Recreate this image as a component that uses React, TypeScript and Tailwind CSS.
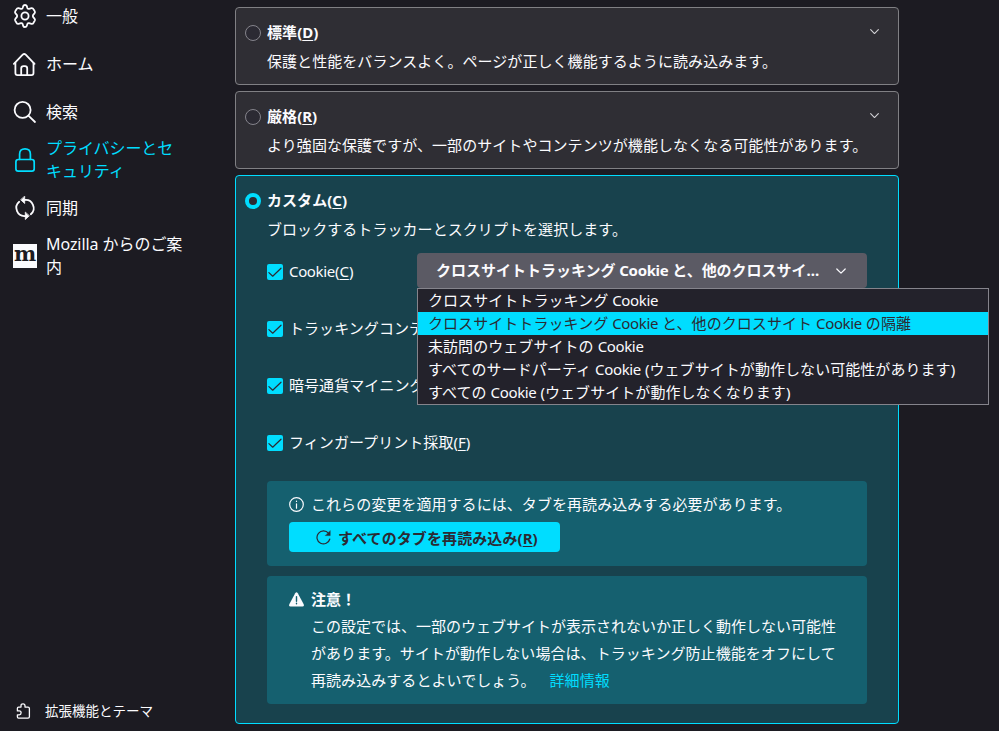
import React from "react";

const stroke = {
  fill: "none",
  stroke: "currentColor",
  strokeLinecap: "round" as const,
  strokeLinejoin: "round" as const,
};

function GearIcon() {
  return (
    <svg className="size-6" viewBox="0 0 24 24" {...stroke} strokeWidth="1.8">
      <path d="M10.3 1.9Q10.6 1 12 1T13.7 1.9L14.4 4.1Q14.9 5.1 16 4.9L18.5 4.2Q19.9 4 20.5 5.2L21.8 7.4Q22.3 8.4 21.5 9.3L20.2 10.8Q19.4 12 20.2 13.2L21.5 14.7Q22.3 15.6 21.8 16.6L20.5 18.8Q19.9 20 18.5 19.8L16 19.1Q14.9 18.9 14.4 19.9L13.7 22.1Q13.4 23 12 23T10.3 22.1L9.6 19.9Q9.1 18.9 8 19.1L5.5 19.8Q4.1 20 3.5 18.8L2.2 16.6Q1.7 15.6 2.5 14.7L3.8 13.2Q4.6 12 3.8 10.8L2.5 9.3Q1.7 8.4 2.2 7.4L3.5 5.2Q4.1 4 5.5 4.2L8 4.9Q9.1 5.1 9.6 4.1Z" />
      <circle cx="12" cy="12" r="3.6" />
    </svg>
  );
}

function HomeIcon() {
  return (
    <svg className="size-6" viewBox="0 0 24 24" {...stroke} strokeWidth="1.8">
      <path d="M.9 11.9L9.7 2.7Q11.2 1.3 12.7 2.7L21.5 11.9" />
      <path d="M2.4 10.8V21Q2.4 23.1 4.5 23.1H18.4Q20.5 23.1 20.5 21V10.8" />
      <path d="M8.2 22.8V16.5Q8.2 14.1 10.4 14.1H12Q14.2 14.1 14.2 16.5V22.8" />
    </svg>
  );
}

function SearchIcon() {
  return (
    <svg className="size-6" viewBox="0 0 24 24" {...stroke} strokeWidth="1.8">
      <circle cx="9.6" cy="9.9" r="8" />
      <path d="M15.4 15.7L22 22" />
    </svg>
  );
}

function LockIcon() {
  return (
    <svg className="size-6" viewBox="0 0 24 24" {...stroke} strokeWidth="1.7">
      <rect x="2.9" y="11.5" width="18.3" height="11.6" rx="2.4" />
      <path d="M6.6 11.3V6.2Q6.6.9 12 .9T17.4 6.2V11.3" />
    </svg>
  );
}

function SyncIcon() {
  return (
    <svg className="size-6" viewBox="0 0 24 24" {...stroke} strokeWidth="1.8">
      <path d="M6.2 5.8A8.1 8.1 0 0 0 12.4 20" />
      <path d="M17.8 18.2A8.1 8.1 0 0 0 11.6 4" />
      <path d="M11.7 .5V7.5L7.9 4Z" fill="currentColor" strokeWidth=".8" />
      <path d="M12.3 16.5V23.5L16.1 20Z" fill="currentColor" strokeWidth=".8" />
    </svg>
  );
}

function MozillaIcon() {
  return (
    <span className="flex size-6 items-center justify-center overflow-hidden bg-[#fbfbfe] pb-[5px] font-['DejaVu_Serif',serif] text-[21px] leading-none font-bold text-[#1c1b22]">
      m
    </span>
  );
}

function PuzzleIcon() {
  return (
    <svg className="size-4" viewBox="0 0 16 16" {...stroke} strokeWidth="1.3">
      <path d="M1.4 5.2Q1.4 4.1 2.5 4.1H5V2.8Q5 .8 7 .8T9 2.8V4.1H12Q13.4 4.1 13.4 5.5V13.7Q13.4 15.1 12 15.1H2.5Q1.4 15.1 1.4 14V11.8H3.2Q5.1 11.7 5.1 9.8T3.2 7.9H1.4Z" />
    </svg>
  );
}

function Chevron({ className }: { className: string }) {
  return (
    <svg className={className} viewBox="0 0 12 12" {...stroke} strokeWidth="1.2">
      <path d="M1.8 4L6 8.2L10.2 4" />
    </svg>
  );
}

const navItems = [
  { label: "一般", icon: <GearIcon /> },
  { label: "ホーム", icon: <HomeIcon /> },
  { label: "検索", icon: <SearchIcon /> },
  { label: "プライバシーとセキュリティ", icon: <LockIcon />, active: true },
  { label: "同期", icon: <SyncIcon /> },
  { label: "Mozilla からのご案内", icon: <MozillaIcon /> },
];

/** Sets the Latin product name slightly tighter than the Japanese text around it. */
function Mixed({ text }: { text: string }) {
  return (
    <>
      {text.split(/(Cookie)/).map((part, i) =>
        i % 2 === 1 ? (
          <span key={i} className="tracking-[-0.35px]">
            {part}
          </span>
        ) : (
          part
        ),
      )}
    </>
  );
}

function Sidebar() {
  return (
    <aside className="flex h-full w-[235px] shrink-0 flex-col justify-between pb-2 pl-[13px] tracking-normal">
      <nav className="-mt-2 flex flex-col">
        {navItems.map((item) => (
          <div
            key={item.label}
            className={`flex h-12 items-center gap-[9px] text-base leading-[23px] ${item.active ? "text-[#00ddff]" : "text-[#fbfbfe]"}`}
          >
            <span className="shrink-0">{item.icon}</span>
            <span className="w-[138px] tracking-[-0.06px] break-all">{item.label}</span>
          </div>
        ))}
      </nav>
      <div className="flex items-center gap-[13px] pl-[3px] text-[13.5px] leading-6 text-[#fbfbfe]">
        <PuzzleIcon />
        <span>拡張機能とテーマ</span>
      </div>
    </aside>
  );
}

function Key({ k }: { k: string }) {
  return (
    <span className="tracking-normal">
      (<span className="underline decoration-1 underline-offset-2">{k}</span>)
    </span>
  );
}

function LevelCard({ title, k, text }: { title: string; k: string; text: string }) {
  return (
    <section className="flex h-[78px] rounded border border-[#808084] bg-[#2f2e34] pt-[11px] pl-[9px]">
      <span className="mt-1.5 mr-1.5 size-4 shrink-0 rounded-full border border-[#85848c] bg-[#2b2a33]" />
      <div className="flex flex-1 flex-col gap-0.5 leading-[27px]">
        <h2 className="font-bold">
          {title}
          <Key k={k} />
        </h2>
        <p>{text}</p>
      </div>
      <Chevron className="mt-[7px] mr-[18px] size-[11px] text-[#d2d2d6]" />
    </section>
  );
}

const blockRows = [
  { label: "Cookie", k: "C" },
  { label: "トラッキングコンテ", k: "" },
  { label: "暗号通貨マイニング", k: "" },
  { label: "フィンガープリント採取", k: "F" },
];

const options = [
  "クロスサイトトラッキング Cookie",
  "クロスサイトトラッキング Cookie と、他のクロスサイト Cookie の隔離",
  "未訪問のウェブサイトの Cookie",
  "すべてのサードパーティ Cookie (ウェブサイトが動作しない可能性があります)",
  "すべての Cookie (ウェブサイトが動作しなくなります)",
];

function CookieSelect() {
  return (
    <div className="relative mt-[10px] h-[35px] w-[450px]">
      <div className="flex h-full items-center rounded bg-[#5b5a64] pr-5 pl-[19px] font-bold">
        <span className="w-[396px] truncate leading-[27px] tracking-[-0.01px]">
          <Mixed text="クロスサイトトラッキング Cookie と、他のクロスサイ..." />
        </span>
        <Chevron className="ml-[3px] size-3 shrink-0" />
      </div>
      <ul className="absolute top-[35px] left-0 z-10 w-[572px] border border-[#85848c] bg-[#23222b]">
        {options.map((option, i) => (
          <li
            key={option}
            className={`h-[23px] pl-2.5 leading-[23px] whitespace-nowrap ${i === 1 ? "bg-[#00ddff] text-[#2b2a33]" : ""}`}
          >
            <Mixed text={option} />
          </li>
        ))}
      </ul>
    </div>
  );
}

function BlockRow({ label, k, children }: { label: string; k: string; children?: React.ReactNode }) {
  return (
    <div className="flex h-[57px] items-start">
      <div className="flex w-[150px] shrink-0 items-center gap-1.5 pt-[15px] leading-[27px] whitespace-nowrap">
        <span className="size-4 shrink-0 rounded-xs bg-[#00ddff] text-[#2b2a33]">
          <svg className="size-4" viewBox="0 0 16 16" {...stroke} strokeWidth="1.2">
            <path d="M1.9 8.6L5.7 12.2L14 4.2" />
          </svg>
        </span>
        <span>
          <Mixed text={label} />
          {k && <Key k={k} />}
        </span>
      </div>
      {children}
    </div>
  );
}

function CustomCard() {
  return (
    <section className="flex h-[549px] rounded border border-[#00ddff] bg-[#18424d] pt-[11px] pl-[9px]">
      <span className="mt-1.5 mr-1.5 size-4 shrink-0 rounded-full border-4 border-[#00ddff] bg-[#2b2a33]" />
      <div className="w-[600px] leading-[27px]">
        <h2 className="font-bold">
          カスタム
          <Key k="C" />
        </h2>
        <p className="mt-0.5">ブロックするトラッカーとスクリプトを選択します。</p>
        <div>
          {blockRows.map((row, i) => (
            <BlockRow key={row.label} label={row.label} k={row.k}>
              {i === 0 && <CookieSelect />}
            </BlockRow>
          ))}
        </div>
        <div className="mt-[10px] h-[85px] rounded bg-[#15606f] pt-2.5 pl-[22px]">
          <div className="flex items-center gap-[7px]">
            <svg className="size-[15px]" viewBox="0 0 15 15" {...stroke} strokeWidth="1.2">
              <circle cx="7.5" cy="7.5" r="6.8" />
              <path d="M7.5 6.8V11.2M7.5 4.1V4.4" />
            </svg>
            <span>これらの変更を適用するには、タブを再読み込みする必要があります。</span>
          </div>
          <button className="mt-1 flex h-[30px] w-[271px] items-center rounded bg-[#00ddff] pl-[27px] font-bold tracking-[0.1px] text-[#2b2a33]">
            <svg className="mr-[7px] size-[15px]" viewBox="0 0 15 15" {...stroke} strokeWidth="1.2">
              <path d="M13.8 9A6.5 6.5 0 1 1 12.6 3.4" />
              <path d="M14.2 1V5.6H9.6Z" fill="currentColor" strokeWidth=".5" />
            </svg>
            <span className="pt-0.5">
              すべてのタブを再読み込み
              <Key k="R" />
            </span>
          </button>
        </div>
        <div className="mt-2.5 h-32 rounded bg-[#15606f] pt-2.5 pl-[22px]">
          <div className="flex items-center gap-[7px] font-bold">
            <svg className="size-[15px]" viewBox="0 0 15 15">
              <path
                d="M6.2 1.2Q7.5-.5 8.8 1.2L14.7 12.3Q15.3 14.3 13.5 14.5H1.5Q-.3 14.3.3 12.3Z"
                fill="#fbfbfe"
              />
              <path d="M7.5 4.6V9.3M7.5 11.3V11.7" stroke="#15606f" strokeWidth="1.4" strokeLinecap="round" />
            </svg>
            <span>注意！</span>
          </div>
          <p className="pl-[22px] whitespace-nowrap">
            <span className="tracking-normal">
              この設定では、一部のウェブサイトが表示されないか正しく動作しない可能性
            </span>
            <br />
            があります。サイトが動作しない場合は、トラッキング防止機能をオフにして
            <br />
            再読み込みするとよいでしょう。
            <a className="ml-[14px] text-[#00ddff]">詳細情報</a>
          </p>
        </div>
      </div>
    </section>
  );
}

export default function App() {
  return (
    <div
      lang="ja"
      className="flex h-[731px] w-[999px] overflow-hidden bg-[#1c1b22] font-['Noto_Sans','Noto_Sans_CJK_JP',sans-serif] text-[15px] tracking-[0.06px] text-[#fbfbfe]"
    >
      <Sidebar />
      <main className="flex w-[664px] shrink-0 flex-col gap-1.5 pt-[7px]">
        <LevelCard
          title="標準"
          k="D"
          text="保護と性能をバランスよく。ページが正しく機能するように読み込みます。"
        />
        <LevelCard
          title="厳格"
          k="R"
          text="より強固な保護ですが、一部のサイトやコンテンツが機能しなくなる可能性があります。"
        />
        <CustomCard />
      </main>
    </div>
  );
}
